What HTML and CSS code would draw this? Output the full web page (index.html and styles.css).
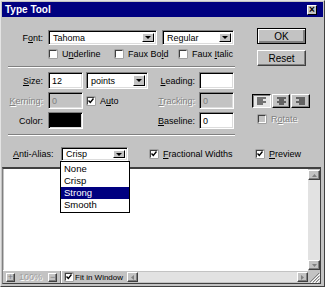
FILE: index.html
```html
<!DOCTYPE html>
<html lang="en">
<head>
    <meta charset="UTF-8">
    <title>Type Tool</title>
    <link rel="stylesheet" href="styles.css">
</head>
<body>
    <div class="window">
        <div class="titlebar">
            <span>Type Tool</span>
            <span class="close">&#215;</span>
        </div>

        <div class="settings">
            <div class="fields">
                <div class="font-row">
                    <span class="label">F<u>o</u>nt:</span>
                    <div class="field select font-name"><span>Tahoma</span><span class="arrow"></span></div>
                    <div class="field select font-style"><span>Regular</span><span class="arrow"></span></div>
                </div>
                <div class="check-row">
                    <span class="check underline"><span class="box"></span><span>U<u>n</u>derline</span></span>
                    <span class="check faux-bold"><span class="box"></span><span>Faux Bo<u>l</u>d</span></span>
                    <span class="check"><span class="box"></span><span>Faux <u>I</u>talic</span></span>
                </div>
                <div class="sep"></div>
                <div class="grid">
                    <span class="label"><u>S</u>ize:</span>
                    <div class="field"><span>12</span></div>
                    <div class="field select points"><span>points</span><span class="arrow"></span></div>
                    <span class="label2"><u>L</u>eading:</span>
                    <div class="field"></div>

                    <span class="label off"><u>K</u>erning:</span>
                    <div class="field disabled"><span>0</span></div>
                    <span class="check auto"><span class="box checked"></span><span>A<u>u</u>to</span></span>
                    <span class="label2 off"><u>T</u>racking:</span>
                    <div class="field disabled"><span>0</span></div>

                    <span class="label">Color:</span>
                    <div class="field swatch"></div>
                    <span></span>
                    <span class="label2"><u>B</u>aseline:</span>
                    <div class="field"><span>0</span></div>
                </div>
                <div class="sep"></div>
            </div>

            <div class="side">
                <div class="button default">OK</div>
                <div class="button">Reset</div>
                <div class="align">
                    <span class="align-btn pressed">
                        <svg width="11" height="9" viewBox="0 0 11 9"><path d="M1 1h9M1 3h6M1 5h9M1 7h6" stroke="#000" stroke-width="1"/></svg>
                    </span>
                    <span class="align-btn">
                        <svg width="11" height="9" viewBox="0 0 11 9"><path d="M1 1h9M3 3h5M1 5h9M3 7h5" stroke="#000" stroke-width="1"/></svg>
                    </span>
                    <span class="align-btn">
                        <svg width="11" height="9" viewBox="0 0 11 9"><path d="M1 1h9M4 3h6M1 5h9M4 7h6" stroke="#000" stroke-width="1"/></svg>
                    </span>
                </div>
                <span class="check rotate off"><span class="box grey"></span><span>R<u>o</u>tate</span></span>
            </div>
        </div>

        <div class="aa-row">
            <span class="aa-label"><u>A</u>nti-Alias:</span>
            <div class="field select aa-select">
                <span>Crisp</span><span class="arrow"></span>
                <ul class="list">
                    <li>None</li>
                    <li>Crisp</li>
                    <li class="active">Strong</li>
                    <li>Smooth</li>
                </ul>
            </div>
            <span class="check fractional"><span class="box checked"></span><span><u>F</u>ractional Widths</span></span>
            <span class="check"><span class="box checked"></span><span><u>P</u>review</span></span>
        </div>

        <div class="preview">
            <div class="canvas"></div>
            <div class="vscroll">
                <span class="sbtn"><svg width="5" height="3" viewBox="0 0 5 3"><path d="M2.5 0L5 3H0z" fill="#808080"/></svg></span>
                <span class="track"></span>
                <span class="sbtn"><svg width="5" height="3" viewBox="0 0 5 3"><path d="M0 0h5L2.5 3z" fill="#808080"/></svg></span>
            </div>
            <div class="status">
                <span class="sbtn zoom">+</span>
                <span class="percent">100%</span>
                <span class="sbtn zoom">&#8722;</span>
                <span class="divider"></span>
                <span class="check fit"><span class="box checked"></span><span>Fit in Window</span></span>
                <span class="sbtn"><svg width="3" height="5" viewBox="0 0 3 5"><path d="M3 0v5L0 2.5z" fill="#808080"/></svg></span>
                <span class="track"></span>
                <span class="sbtn"><svg width="3" height="5" viewBox="0 0 3 5"><path d="M0 0l3 2.5L0 5z" fill="#808080"/></svg></span>
            </div>
            <div class="grip">
                <svg width="12" height="12" viewBox="0 0 12 12"><path d="M11 2L2 11M11 5L5 11M11 8L8 11" stroke="#808080" stroke-width="1"/><path d="M12 3L3 12M12 6L6 12M12 9L9 12" stroke="#fff" stroke-width="1"/></svg>
            </div>
        </div>
    </div>
</body>
</html>
```

FILE: styles.css
```css
* {
    box-sizing: border-box;
}

body {
    margin: 0;
    overflow: hidden;
    background: #c3c3c3;
    font-family: "Liberation Sans", Arial, sans-serif;
    font-size: 9px;
    color: #000;
}

u {
    text-decoration: underline;
}

.window {
    width: 325px;
    height: 287px;
    padding: 1px;
    border: 1px solid;
    border-color: #e4e4e4 #404040 #404040 #e4e4e4;
    background: #c3c3c3;
}

.titlebar {
    height: 15px;
    display: flex;
    align-items: center;
    justify-content: space-between;
    padding: 0 6px 0 3px;
    background: #000080;
    color: #fff;
    font-size: 10px;
    font-weight: bold;
}

.close {
    width: 10px;
    height: 10px;
    display: flex;
    align-items: center;
    justify-content: center;
    background: #c3c3c3;
    color: #000;
    font-size: 10px;
    line-height: 1;
    border: 1px solid;
    border-color: #fff #000 #000 #fff;
}

/* top block: fields on the left, buttons on the right */
.settings {
    display: flex;
}

.fields {
    width: 234px;
}

.label {
    width: 46px;
    padding-right: 5px;
    text-align: right;
}

.off {
    color: #808080;
    text-shadow: 1px 1px 0 #fff;
}

.font-row {
    display: flex;
    align-items: center;
    margin-top: 13px;
    height: 15px;
}

.field {
    height: 17px;
    display: flex;
    align-items: center;
    padding: 0 3px;
    background: #fff;
    border: 1px solid;
    border-color: #808080 #fff #fff #808080;
    box-shadow: inset 1px 1px 0 #000, inset -1px -1px 0 #dcdcdc;
}

.field.disabled {
    background: #c3c3c3;
    color: #808080;
}

.field.swatch {
    background: #000;
}

.select {
    position: relative;
    justify-content: space-between;
    padding: 0 2px 0 4px;
}

.font-row .field {
    height: 15px;
}

.font-name {
    width: 109px;
    margin-right: 5px;
}

.font-style {
    width: 72px;
}

.arrow {
    width: 12px;
    height: calc(100% - 4px);
    display: flex;
    align-items: center;
    justify-content: center;
    background: #c3c3c3;
    border: 1px solid;
    border-color: #fff #000 #000 #fff;
}

.arrow::after {
    content: "";
    border-left: 3px solid transparent;
    border-right: 3px solid transparent;
    border-top: 3px solid #000;
}

.check {
    display: flex;
    align-items: center;
    white-space: nowrap;
}

.box {
    width: 8px;
    height: 8px;
    margin-right: 5px;
    background: #fff;
    border: 1px solid;
    border-color: #404040 #fff #fff #404040;
    box-shadow: 0 0 0 0.5px #808080;
}

.box.checked {
    background: #fff url("data:image/svg+xml;utf8,<svg xmlns='http://www.w3.org/2000/svg' width='6' height='6' viewBox='0 0 6 6'><path d='M0.5 2.5l1.8 2L5.5 0.5' fill='none' stroke='black' stroke-width='1.4'/></svg>") center / 6px 6px no-repeat;
}

.box.grey {
    background: #c3c3c3;
}

.check-row {
    display: flex;
    align-items: center;
    height: 10px;
    margin-top: 4px;
    padding-left: 47px;
}

.underline {
    width: 66px;
}

.faux-bold {
    width: 64px;
}

.sep {
    width: 227px;
    height: 2px;
    margin-left: 6px;
    border-top: 1px solid #808080;
    border-bottom: 1px solid #fff;
}

.check-row + .sep {
    margin-top: 7px;
}

.grid {
    display: grid;
    grid-template-columns: 46px 38px 62px 51px 35px;
    grid-auto-rows: 17px;
    row-gap: 3px;
    align-items: center;
    margin: 4px 0 5px;
}

.grid .field {
    width: 35px;
}

.grid .field.points {
    width: 62px;
}

.grid .check.auto {
    padding-left: 1px;
}

.label2 {
    padding-right: 4px;
    text-align: right;
}

.side {
    width: 58px;
    margin-left: 16px;
    padding-top: 11px;
}

.button {
    width: 49px;
    height: 16px;
    margin-left: 5px;
    display: flex;
    align-items: center;
    justify-content: center;
    background: #c3c3c3;
    border: 1px solid;
    border-color: #fff #404040 #404040 #fff;
    box-shadow: inset -1px -1px 0 #808080;
    font-size: 10px;
}

.button.default {
    border-color: #000;
    box-shadow: inset 1px 1px 0 #fff, inset -2px -2px 0 #808080;
}

.button + .button {
    margin-top: 6px;
}

.align {
    display: flex;
    gap: 1px;
    margin-top: 28px;
}

.align-btn {
    width: 19px;
    height: 14px;
    display: flex;
    align-items: center;
    justify-content: center;
    background: #c3c3c3;
    border: 1px solid;
    border-color: #fff #000 #000 #fff;
    box-shadow: inset -1px -1px 0 #808080;
}

.align-btn.pressed {
    background: #e6e6e6;
    border-color: #000 #fff #fff #000;
    box-shadow: inset 1px 1px 0 #808080;
}

.rotate {
    margin: 6px 0 0 6px;
}

/* anti-alias line */
.aa-row {
    display: flex;
    align-items: center;
    height: 14px;
    margin-top: 11px;
    padding-left: 11px;
}

.aa-label {
    width: 48px;
}

.aa-select {
    width: 67px;
    height: 14px;
    margin-right: 22px;
}

.list {
    position: absolute;
    top: calc(100% + 1px);
    left: -2px;
    width: 70px;
    margin: 0;
    padding: 1px 0;
    list-style: none;
    background: #fff;
    border: 1px solid #000;
    z-index: 2;
}

.list li {
    height: 12px;
    line-height: 12px;
    padding-left: 3px;
    font-size: 9.5px;
}

.list li.active {
    background: #000080;
    color: #fff;
}

.fractional {
    width: 106px;
}

/* preview pane */
.preview {
    display: grid;
    grid-template-columns: 1fr 12px;
    grid-template-rows: 1fr 13px;
    width: 319px;
    height: 117px;
    margin-top: 6px;
    border: 1px solid;
    border-color: #404040 #404040 #404040 #808080;
    border-top-width: 2px;
    background: #c3c3c3;
}

.canvas {
    background: #fff;
    border-left: 1px solid #c3c3c3;
}

.vscroll {
    display: flex;
    flex-direction: column;
}

.track {
    flex: 1;
    background: #e2e2e2;
}

.sbtn {
    width: 11px;
    height: 10px;
    display: flex;
    align-items: center;
    justify-content: center;
    background: #c3c3c3;
    border: 1px solid;
    border-color: #fff #404040 #404040 #fff;
    box-shadow: inset -1px -1px 0 #808080;
    color: #808080;
    font-size: 9px;
    line-height: 1;
}

.vscroll .sbtn {
    width: 12px;
    height: 10px;
}

.vscroll .sbtn:first-child {
    margin-top: 1px;
}

.status {
    display: flex;
    align-items: center;
    padding-left: 3px;
    border-top: 1px solid #fff;
}

.status .track {
    align-self: stretch;
    margin: 1px 0;
}

.zoom {
    width: 9px;
    height: 9px;
}

.percent {
    margin: 0 6px 0 4px;
    color: #a0a0a0;
    text-shadow: 1px 1px 0 #fff;
}

.divider {
    width: 2px;
    height: 12px;
    margin: 0 3px;
    border-left: 1px solid #808080;
    border-right: 1px solid #fff;
}

.fit {
    width: 62px;
    font-size: 8px;
}

.fit .box {
    margin-right: 2px;
}

.grip {
    display: flex;
    align-items: flex-end;
    justify-content: flex-end;
    background: #c3c3c3;
}
```
